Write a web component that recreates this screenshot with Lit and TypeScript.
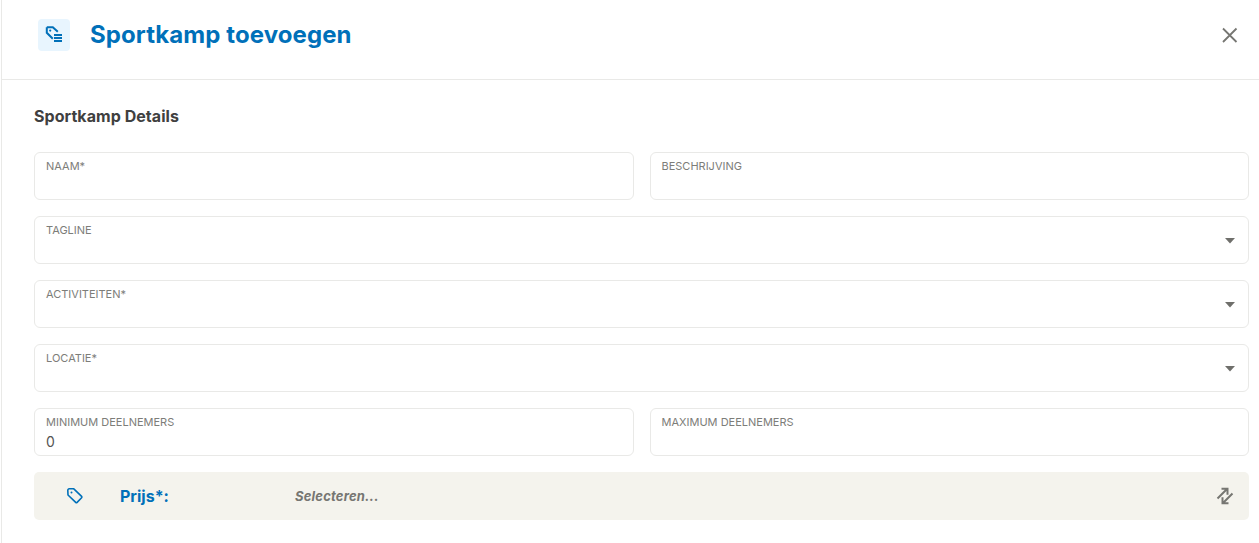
import { LitElement, html, css } from "lit";
import { customElement } from "lit/decorators.js";

const caret = html`<svg class="caret" width="10" height="6" viewBox="0 0 10 6"><path d="M0 0h10L5 5.5z" fill="#6f6f6b"/></svg>`;

@customElement("app-root")
export class AppRoot extends LitElement {
  static styles = css`
    :host { display: block; font-family: Inter, "Liberation Sans", sans-serif; color: #3a3a38; background: #fff; height: 543px; overflow: hidden; }
    .page { margin-left: 1px; border-left: 1px solid #e9e9e7; height: 543px; box-sizing: border-box; }
    .head { height: 80px; box-sizing: border-box; border-bottom: 1px solid #e9e9e7; display: flex; align-items: center; padding: 0 20px 10px 36px; }
    .badge { width: 32px; height: 32px; border-radius: 4px; background: #e8f5fe; display: flex; align-items: center; justify-content: center; margin-right: 20px; }
    h1 { margin: 0; font-size: 24px; line-height: 30px; font-weight: 700; letter-spacing: .1px; color: #0070b9; flex: 1; }
    .close { display: flex; }
    .body { padding: 26px 10px 0 32px; }
    h2 { margin: 0 0 25px; font-size: 16px; line-height: 21px; font-weight: 700; letter-spacing: .05px; color: #404040; }
    .rows { display: flex; flex-direction: column; gap: 16px; }
    .two { display: grid; grid-template-columns: 1fr 1fr; gap: 16px; }
    .field { height: 48px; box-sizing: border-box; border: 1px solid #e9e9e7; border-radius: 6px; padding: 6px 11px 0; position: relative; background: #fff; }
    .lab { font-size: 11px; line-height: 14px; color: #7d7d79; text-transform: uppercase; }
    .val { font-size: 14px; line-height: 18px; margin-top: 4px; color: #555553; }
    .caret { position: absolute; right: 13px; top: 21px; }
    .bar { height: 48px; background: #f4f3ed; border-radius: 5px; display: flex; align-items: center; padding: 0 15px 0 32px; }
    .bar .tag { display: flex; margin-right: 36px; }
    .pr { font-size: 16px; font-weight: 700; color: #0070b9; width: 175px; }
    .sel { font-size: 13px; font-weight: 700; font-style: italic; color: #767672; letter-spacing: .2px; flex: 1; }
    .sw { display: flex; }
  `;

  private field(label: string, value = "", select = false) {
    return html`<div class="field"><div class="lab">${label}</div>${value ? html`<div class="val">${value}</div>` : ""}${select ? caret : ""}</div>`;
  }

  render() {
    return html`<div class="page">
      <div class="head">
        <div class="badge">
          <svg width="18" height="18" viewBox="0 0 18 18" fill="none" stroke="#0070b9">
            <path d="M1.8 1.3h6l5 4.5M1.8 1.3v5.5l6 6" stroke-width="2"/>
            <circle cx="5.2" cy="4.6" r="1.1" fill="#0070b9" stroke="none"/>
            <path d="M9 9h8M9 12h8M9 15h8" stroke-width="1.8"/>
          </svg>
        </div>
        <h1>Sportkamp toevoegen</h1>
        <div class="close"><svg width="18" height="18" viewBox="0 0 18 18"><path d="M2 2.5l13.5 13.5M15.5 2.5L2 16" stroke="#767672" stroke-width="1.8" fill="none"/></svg></div>
      </div>
      <div class="body">
        <h2>Sportkamp Details</h2>
        <div class="rows">
          <div class="two">${this.field("Naam*")}${this.field("Beschrijving")}</div>
          ${this.field("Tagline", "", true)}
          ${this.field("Activiteiten*", "", true)}
          ${this.field("Locatie*", "", true)}
          <div class="two">${this.field("Minimum deelnemers", "0")}${this.field("Maximum deelnemers")}</div>
          <div class="bar">
            <div class="tag"><svg width="18" height="18" viewBox="0 0 18 18" fill="none" stroke="#0070b9" stroke-width="1.6" stroke-linejoin="round"><path d="M1.8 3.2a1.4 1.4 0 0 1 1.4-1.4h4.6l7.8 7.5a1 1 0 0 1 0 1.4l-4.5 4.7a1 1 0 0 1-1.4 0L2 8z"/><circle cx="5.5" cy="5.5" r="1" fill="#0070b9" stroke="none"/></svg></div>
            <div class="pr">Prijs*:</div>
            <div class="sel">Selecteren...</div>
            <div class="sw"><svg width="18" height="18" viewBox="0 0 18 18" fill="none" stroke="#767672" stroke-width="2"><path d="M1.5 11.5L11 2M5.5 1.8h6v6M16.5 6.5L7 16M12.5 16.2h-6v-6"/></svg></div>
          </div>
        </div>
      </div>
    </div>`;
  }
}
